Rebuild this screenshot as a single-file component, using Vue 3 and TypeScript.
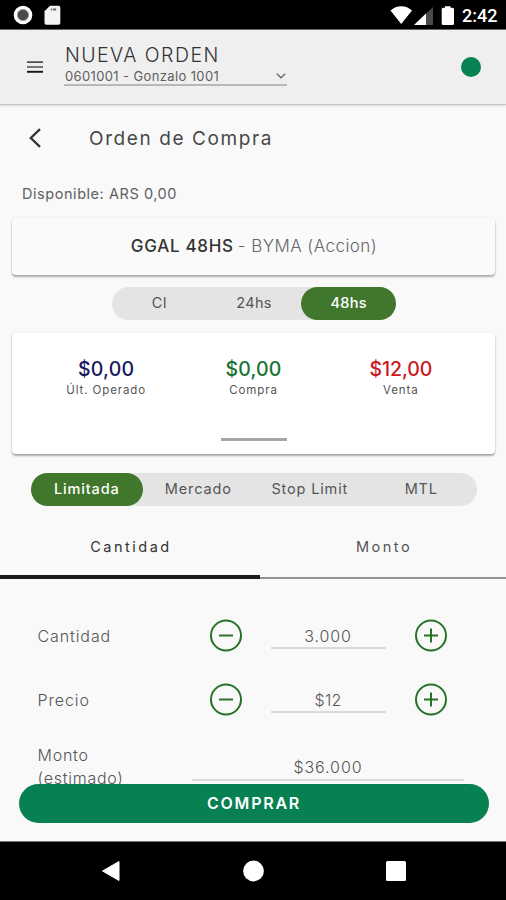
<script setup lang="ts">
import { ref } from 'vue'

interface Quote {
  key: string
  price: string
  label: string
}

interface Field {
  key: string
  label: string
  value: string
}

const terms: string[] = ['CI', '24hs', '48hs']
const term = ref('48hs')

const quotes: Quote[] = [
  { key: 'last', price: '$0,00', label: 'Últ. Operado' },
  { key: 'buy', price: '$0,00', label: 'Compra' },
  { key: 'sell', price: '$12,00', label: 'Venta' },
]

const orderTypes: string[] = ['Limitada', 'Mercado', 'Stop Limit', 'MTL']
const orderType = ref('Limitada')

const tabs: string[] = ['Cantidad', 'Monto']
const tab = ref('Cantidad')

const fields: Field[] = [
  { key: 'quantity', label: 'Cantidad', value: '3.000' },
  { key: 'price', label: 'Precio', value: '$12' },
]
</script>

<template>
  <div class="screen">
    <div class="status">
      <svg class="status-left" width="52" height="22" viewBox="0 0 52 22">
        <circle cx="10" cy="11" r="9.3" fill="#fff" />
        <circle cx="10" cy="11" r="5.6" fill="#4a4a4a" stroke="#999" stroke-width="1" />
        <path d="M37 1.800h8.500q1.800 0 1.800 1.800v15.400q0 1.800-1.800 1.800H33.300q-1.800 0-1.800-1.800V7.300z" fill="#f4f4f4" />
        <path d="M37.800 5.500h1.300M40 5.500h3.200" stroke="#666" stroke-width="2" />
      </svg>
      <div class="status-right">
        <svg width="66" height="22" viewBox="0 0 66 22">
          <path d="M.5 6.500C6.500.8 16 .8 22 6.500L11.200 20z" fill="#fff" />
          <path d="M43 3v18H24z" fill="#4a4a4a" />
          <path d="M36 9.600V21H24z" fill="#fff" />
          <path d="M55 2.200h5.500v1.600h2q1.500 0 1.500 1.500v14.200q0 1.500-1.500 1.500h-9.300q-1.500 0-1.500-1.500V5.300q0-1.500 1.500-1.500H55z" fill="#fff" />
        </svg>
        <span class="clock">2:42</span>
      </div>
    </div>

    <header class="header">
      <button class="menu" aria-label="Menú">
        <svg width="18" height="14" viewBox="0 0 18 14">
          <path d="M1 2.200h16M1 7h16" stroke="#505050" stroke-width="1.700" />
          <path d="M1 11.800h16" stroke="#151515" stroke-width="1.900" />
        </svg>
      </button>
      <div class="account">
        <div class="heading">NUEVA ORDEN</div>
        <div class="select">
          <span>0601001 - Gonzalo 1001</span>
          <svg width="10" height="6" viewBox="0 0 10 6">
            <path d="M.8.800 5 4.800 9.200.800" fill="none" stroke="#666" stroke-width="1.300" />
          </svg>
        </div>
      </div>
      <span class="online"></span>
    </header>

    <main class="content">
      <div class="title-row">
        <svg width="14" height="20" viewBox="0 0 14 20">
          <path d="M12 1.200 2.800 10l9.200 8.800" fill="none" stroke="#333" stroke-width="2.300" />
        </svg>
        <h1>Orden de Compra</h1>
      </div>

      <p class="available">Disponible: ARS 0,00</p>

      <section class="card instrument">
        <strong>GGAL 48HS</strong><span>- BYMA (Accion)</span>
      </section>

      <div class="segment terms">
        <button v-for="t in terms" :key="t" :class="{ on: t === term }" @click="term = t">
          {{ t }}
        </button>
      </div>

      <section class="card quotes">
        <div class="quote-list">
          <div v-for="q in quotes" :key="q.key" class="quote" :class="q.key">
            <div class="amount">{{ q.price }}</div>
            <div class="caption">{{ q.label }}</div>
          </div>
        </div>
        <div class="handle"></div>
      </section>

      <div class="segment types">
        <button v-for="t in orderTypes" :key="t" :class="{ on: t === orderType }" @click="orderType = t">
          {{ t }}
        </button>
      </div>

      <nav class="tabs">
        <button v-for="t in tabs" :key="t" :class="{ on: t === tab }" @click="tab = t">
          {{ t }}
        </button>
      </nav>

      <div class="form">
        <div v-for="f in fields" :key="f.key" class="field">
          <span class="label">{{ f.label }}</span>
          <svg class="step" width="34" height="34" viewBox="0 0 34 34">
            <circle cx="17" cy="16.500" r="15" />
            <path d="M10 16.500h14" />
          </svg>
          <span class="value" :class="f.key">{{ f.value }}</span>
          <svg class="step" width="34" height="34" viewBox="0 0 34 34">
            <circle cx="17" cy="16.500" r="15" />
            <path d="M10 16.500h14M17 9.500v14" />
          </svg>
        </div>
        <div class="total">
          <span class="label">Monto<br />(estimado)</span>
          <span class="value">$36.000</span>
        </div>
      </div>

      <div class="action">
        <button class="buy-button">COMPRAR</button>
      </div>
    </main>

    <footer class="navbar">
      <svg width="20" height="22" viewBox="0 0 20 22">
        <path d="M18 1.500v19L1.500 11z" fill="#fff" stroke="#fff" stroke-width="1" stroke-linejoin="round" />
      </svg>
      <svg width="22" height="22" viewBox="0 0 22 22"><circle cx="10.500" cy="11" r="10.400" fill="#fff" /></svg>
      <svg width="20" height="20" viewBox="0 0 20 20"><rect width="20" height="20" rx="1.500" fill="#fff" /></svg>
    </footer>
  </div>
</template>

<style>
body {
  background: #f9f9f9;
}
</style>

<style scoped>
.screen {
  width: 506px;
  height: 900px;
  display: flex;
  flex-direction: column;
  overflow: hidden;
  background: #f9f9f9;
  color: #555;
  font-family: Inter, 'Liberation Sans', sans-serif;
}

.screen * {
  box-sizing: border-box;
}

button {
  border: 0;
  margin: 0;
  padding: 0;
  background: none;
  color: inherit;
  font: inherit;
  letter-spacing: inherit;
  white-space: nowrap;
}

.status {
  flex: none;
  height: 30px;
  padding: 0 9px 0 13px;
  display: flex;
  align-items: center;
  justify-content: space-between;
  background: #000;
  border-bottom: 1px solid #666;
}

.status-right {
  display: flex;
  align-items: center;
  gap: 6px;
}

.clock {
  width: 35px;
  color: #fff;
  font: 500 18px/22px Roboto, sans-serif;
  white-space: nowrap;
  padding-top: 2px;
}

.header {
  flex: none;
  position: relative;
  height: 75px;
  padding: 0 25px 0 26px;
  display: flex;
  align-items: flex-start;
  background: #efefef;
  border-bottom: 1px solid #c6c6c6;
  box-shadow: 0 1px 2px rgba(0, 0, 0, 0.13);
}

.menu {
  display: flex;
  width: 18px;
  margin-top: 30px;
}

.account {
  width: 223px;
  margin: 13px 0 0 20px;
  padding-left: 1px;
  border-bottom: 2px solid #b8b8b8;
  height: 43px;
}

.heading {
  font-size: 19.5px;
  line-height: 25px;
  letter-spacing: 1.45px;
  color: #333;
  font-weight: 300;
}

.select {
  display: flex;
  align-items: center;
  justify-content: space-between;
  height: 16px;
  padding-right: 1px;
  font-size: 13px;
  line-height: 16px;
  letter-spacing: 0.37px;
  color: #606060;
}

.online {
  width: 20px;
  height: 20px;
  margin: 27px 0 0 auto;
  border-radius: 50%;
  background: #078253;
}

.content {
  flex: 1;
  min-height: 0;
  display: flex;
  flex-direction: column;
  overflow: hidden;
}

.title-row {
  flex: none;
  height: 66px;
  padding-left: 28px;
  display: flex;
  align-items: center;
  gap: 47px;
}

h1 {
  margin: 0;
  font-size: 19px;
  font-weight: 400;
  letter-spacing: 1.6px;
  color: #484848;
}

.available {
  margin: 13px 0 14px 22px;
  font-size: 14.5px;
  line-height: 20px;
  letter-spacing: 0.55px;
  color: #606060;
}

.card {
  flex: none;
  margin: 0 11px 0 12px;
  border-radius: 4px;
  box-shadow: 0 2px 2px rgba(0, 0, 0, 0.3), 0 0 2px rgba(0, 0, 0, 0.12);
}

.instrument {
  height: 57px;
  padding: 0 0 2px 1px;
  display: flex;
  align-items: center;
  justify-content: center;
  gap: 4px;
  background: #fafafa;
  font-size: 17px;
  font-weight: 300;
  letter-spacing: 0.45px;
  color: #666;
}

.instrument strong {
  font-weight: 500;
  letter-spacing: 0.7px;
  color: #333;
}

.segment {
  flex: none;
  display: flex;
  height: 33px;
  border-radius: 17px;
  background: #e4e4e4;
  font-size: 14.5px;
  letter-spacing: 0.3px;
}

.segment button {
  flex: 1;
  height: 33px;
  padding-bottom: 2px;
  border-radius: 17px;
  line-height: 30px;
}

.segment .on {
  background: #40772d;
  color: #fff;
  font-weight: 500;
}

.terms {
  width: 284px;
  margin: 12px 0 0 112px;
}

.quotes {
  height: 121px;
  margin-top: 13px;
  display: flex;
  flex-direction: column;
  align-items: center;
  background: #fff;
}

.quote-list {
  width: 442px;
  display: flex;
  padding-top: 25px;
}

.quote {
  flex: 1;
  text-align: center;
}

.amount {
  font-size: 19.5px;
  line-height: 22px;
  font-weight: 500;
  letter-spacing: 0.2px;
}

.last .amount {
  color: #17195e;
}

.buy .amount {
  color: #167334;
}

.sell .amount {
  color: #cb171e;
  letter-spacing: -0.1px;
}

.caption {
  margin-top: 1px;
  font-size: 11.5px;
  line-height: 18px;
  letter-spacing: 0.9px;
}

.handle {
  width: 66px;
  height: 3px;
  margin-top: 39px;
  background: #a6a6a6;
}

.types {
  width: 446px;
  margin: 19px 0 0 31px;
  letter-spacing: 0.85px;
}

.tabs {
  flex: none;
  height: 73px;
  display: flex;
}

.tabs button {
  flex: 1;
  padding: 10px 0 0 2px;
  border-bottom: 2px solid #949494;
  font-size: 14.5px;
  letter-spacing: 2.5px;
}

.tabs .on {
  flex: none;
  width: 260px;
  padding-top: 12px;
  border-bottom: 4px solid #1f1a1c;
  color: #333;
}

.form {
  flex: none;
  padding: 25px 41.5px 0 37.5px;
  font-size: 16px;
  font-weight: 300;
  letter-spacing: 0.9px;
  color: #555;
}

.field {
  height: 64px;
  display: flex;
  align-items: center;
}

.field .label {
  width: 171px;
}

.field .value {
  width: 115px;
  height: 26px;
  margin: 0 28.5px 0 28px;
  border-bottom: 2px solid #dadada;
  text-align: center;
  line-height: 26px;
}

.field .value.price {
  letter-spacing: 0.2px;
}

.step {
  flex: none;
  fill: none;
  stroke: #267426;
  stroke-width: 2;
}

.total {
  display: flex;
  height: 60px;
  padding-top: 12px;
}

.total .label {
  width: 154.5px;
  line-height: 23px;
  letter-spacing: 0.75px;
}

.total .value {
  width: 272px;
  height: 37px;
  padding-top: 11px;
  border-bottom: 2px solid #dadada;
  text-align: center;
  line-height: 24px;
}

.action {
  position: relative;
  flex: none;
  margin-top: -8px;
  padding: 0 17px 0 19px;
}

.buy-button {
  width: 100%;
  height: 39px;
  padding-bottom: 2px;
  border-radius: 20px;
  background: #078152;
  color: #fff;
  font-size: 16px;
  font-weight: 600;
  letter-spacing: 1.75px;
}

.navbar {
  flex: none;
  height: 59px;
  padding: 0 100px 0 101px;
  display: flex;
  align-items: center;
  justify-content: space-between;
  background: #000;
  border-top: 1px solid #777;
}
</style>
